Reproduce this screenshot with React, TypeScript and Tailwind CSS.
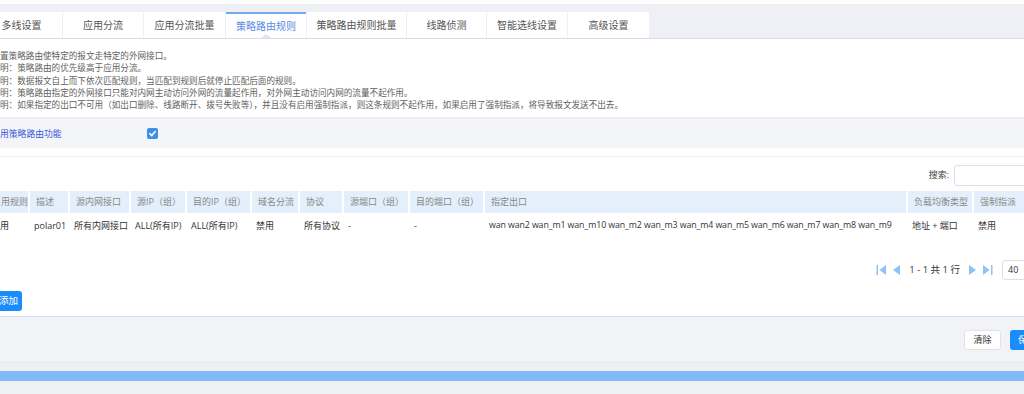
import React from "react";

const tabs = [
  { label: "多线设置", w: "w-[81px]" },
  { label: "应用分流", w: "w-[80px]" },
  { label: "应用分流批量", w: "w-[81px]" },
  { label: "策略路由规则", w: "w-[80px]", active: true },
  { label: "策略路由规则批量", w: "w-[99px]" },
  { label: "线路侦测", w: "w-[79px]" },
  { label: "智能选线设置", w: "w-[80px]" },
  { label: "高级设置", w: "w-[81px]" },
];

const notes = [
  "置策略路由使特定的报文走特定的外网接口。",
  "明：策略路由的优先级高于应用分流。",
  "明：数据报文自上而下依次匹配规则，当匹配到规则后就停止匹配后面的规则。",
  "明：策略路由指定的外网接口只能对内网主动访问外网的流量起作用，对外网主动访问内网的流量不起作用。",
  "明：如果指定的出口不可用（如出口删除、线路断开、拨号失败等），并且没有启用强制指派，则这条规则不起作用，如果启用了强制指派，将导致报文发送不出去。",
];

const cols = [
  { h: "用规则", v: "用", w: "w-[30px]", pl: "pl-[1px]" },
  { h: "描述", v: "polar01", w: "w-[40px]" },
  { h: "源内网接口", v: "所有内网接口", w: "w-[61px]" },
  { h: "源IP（组）", v: "ALL(所有IP)", w: "w-[56px]" },
  { h: "目的IP（组）", v: "ALL(所有IP)", w: "w-[65px]" },
  { h: "域名分流", v: "禁用", w: "w-[48px]" },
  { h: "协议", v: "所有协议", w: "w-[44px]" },
  { h: "源端口（组）", v: "-", w: "w-[66px]" },
  { h: "目的端口（组）", v: "-", w: "w-[75px]" },
  { h: "指定出口", v: "wan wan2 wan_m1 wan_m10 wan_m2 wan_m3 wan_m4 wan_m5 wan_m6 wan_m7 wan_m8 wan_m9", w: "w-[423px]", tight: true },
  { h: "负载均衡类型", v: "地址 + 端口", w: "w-[66px]" },
  { h: "强制指派", v: "禁用", w: "w-[60px]" },
];

function PageIcon({ dir, bar }: { dir: "left" | "right"; bar?: boolean }) {
  return (
    <svg width="11" height="12" viewBox="0 0 11 12" fill="#8cc2f7">
      {dir === "left" ? (
        <>
          {bar && <rect x="0.5" y="1" width="1.5" height="10" />}
          <polygon points={bar ? "10,1 10,11 3.5,6" : "9,1 9,11 2,6"} />
        </>
      ) : (
        <>
          <polygon points={bar ? "1,1 1,11 7.5,6" : "2,1 2,11 9,6"} />
          {bar && <rect x="9" y="1" width="1.5" height="10" />}
        </>
      )}
    </svg>
  );
}

export default function App() {
  return (
    <div className="w-[1024px] h-[394px] overflow-hidden flex flex-col bg-[#f0f1f5] font-['Open_Sans','Noto_Sans_CJK_SC',sans-serif]">
      <div className="h-[4px] bg-[#fcfcfd]" />
      {/* tabs */}
      <div className="h-[35px] bg-[#eff0f5] pt-[8px] flex border-b border-[#d3ddef]">
        <div className="flex gap-[1px] ml-[-19px]">
          {tabs.map((t) => (
            <div
              key={t.label}
              className={`relative h-[26px] ${t.w} flex items-center justify-center bg-white text-[10px] ${
                t.active ? "border-t-2 border-[#74aceb] text-[#5a8ce2]" : "text-[#555]"
              }`}
            >
              {t.label}
              {t.active && (
                <span className="absolute bottom-0 left-1/2 -translate-x-1/2 w-0 h-0 border-l-[5px] border-r-[5px] border-b-[4px] border-l-transparent border-r-transparent border-b-[#e3e6ec]" />
              )}
            </div>
          ))}
        </div>
      </div>
      {/* notes */}
      <div className="h-[78px] bg-white pt-[10px] text-[8.6px] leading-[12.3px] text-[#5f5f5f] font-['Noto_Sans_CJK_SC',sans-serif]">
        {notes.map((n) => (
          <div key={n} className="whitespace-nowrap">{n}</div>
        ))}
      </div>
      <div className="h-[2px] bg-[#eceef3]" />
      {/* enable row */}
      <div className="h-[29px] bg-[#f4f5f8] flex items-center">
        <span className="w-[147px] text-[8.8px] text-[#3655d8] font-['Noto_Sans_CJK_SC',sans-serif]">用策略路由功能</span>
        <span className="w-[11px] h-[11px] rounded-[2px] bg-[#3d8fe8] flex items-center justify-center">
          <svg width="9" height="9" viewBox="0 0 10 10" fill="none" stroke="white" strokeWidth="1.8" strokeLinecap="round" strokeLinejoin="round">
            <path d="M2 5.2 L4.2 7.3 L8 2.8" />
          </svg>
        </span>
      </div>
      {/* panel */}
      <div className="bg-white pt-[8px] border-b border-[#cfdbee]">
        <div className="h-[1px] bg-[#edf0f5]" />
        <div className="h-[34px] flex items-center justify-end pt-[2px]">
          <span className="text-[9px] text-[#444] mr-[5px]">搜索:</span>
          <span className="w-[80px] h-[21px] border border-[#dcdfe6] rounded-[3px] mr-[-10px]" />
        </div>
        <div className="flex h-[22px] bg-[#e3effa] text-[9px] text-[#888]">
          {cols.map((c) => (
            <div key={c.h} className={`${c.w} shrink-0 flex items-center ${c.pl ?? "pl-[6px]"} border-r-2 border-white whitespace-nowrap`}>
              {c.h}
            </div>
          ))}
        </div>
        <div className="flex h-[26px] text-[9px] text-[#333]">
          {cols.map((c) => (
            <div
              key={c.h}
              className={`${c.w} shrink-0 flex items-center ${c.pl ? "pl-0" : "pl-[4px]"} whitespace-nowrap overflow-hidden ${
                c.tight ? "text-[8.8px] tracking-[-0.1px]" : ""
              }`}
            >
              {c.v}
            </div>
          ))}
        </div>
        <div className="h-[21px]" />
        <div className="h-[20px] flex items-center justify-end">
          <div className="flex items-center gap-[4px]">
            <PageIcon dir="left" bar />
            <PageIcon dir="left" />
          </div>
          <span className="mx-[7px] text-[9.5px] text-[#333]">1 - 1 共 1 行</span>
          <div className="flex items-center gap-[4px]">
            <PageIcon dir="right" />
            <PageIcon dir="right" bar />
          </div>
          <span className="ml-[9px] mr-[-10px] w-[32px] h-[20px] border border-[#dcdfe6] rounded-[3px] bg-white flex items-center pl-[5px] text-[9px] text-[#333]">40</span>
        </div>
        <div className="h-[11px]" />
        <div className="h-[20px] flex">
          <span className="ml-[-14px] w-[36px] h-[20px] rounded-[3px] bg-[#1a8cfc] text-white text-[9.5px] flex items-center justify-end pr-[4px]">添加</span>
        </div>
        <div className="h-[5px]" />
      </div>
      {/* footer buttons */}
      <div className="h-[45px] bg-[#f2f3f7] flex items-center justify-end">
        <span className="w-[37px] h-[20px] rounded-[3px] bg-white border border-[#e1e3e9] text-[9px] text-[#333] flex items-center justify-center">清除</span>
        <span className="ml-[9px] mr-[-20px] w-[34px] h-[20px] rounded-[3px] bg-[#1a8cfc] text-white text-[9px] flex items-center justify-center">保存</span>
      </div>
      <div className="h-[1px] bg-[#e6e8ee]" />
      <div className="h-[8px] bg-[#eef0f4]" />
      <div className="h-[10px] bg-[#80bbf7]" />
      <div className="flex-1 bg-[#f0f1f5]" />
    </div>
  );
}
